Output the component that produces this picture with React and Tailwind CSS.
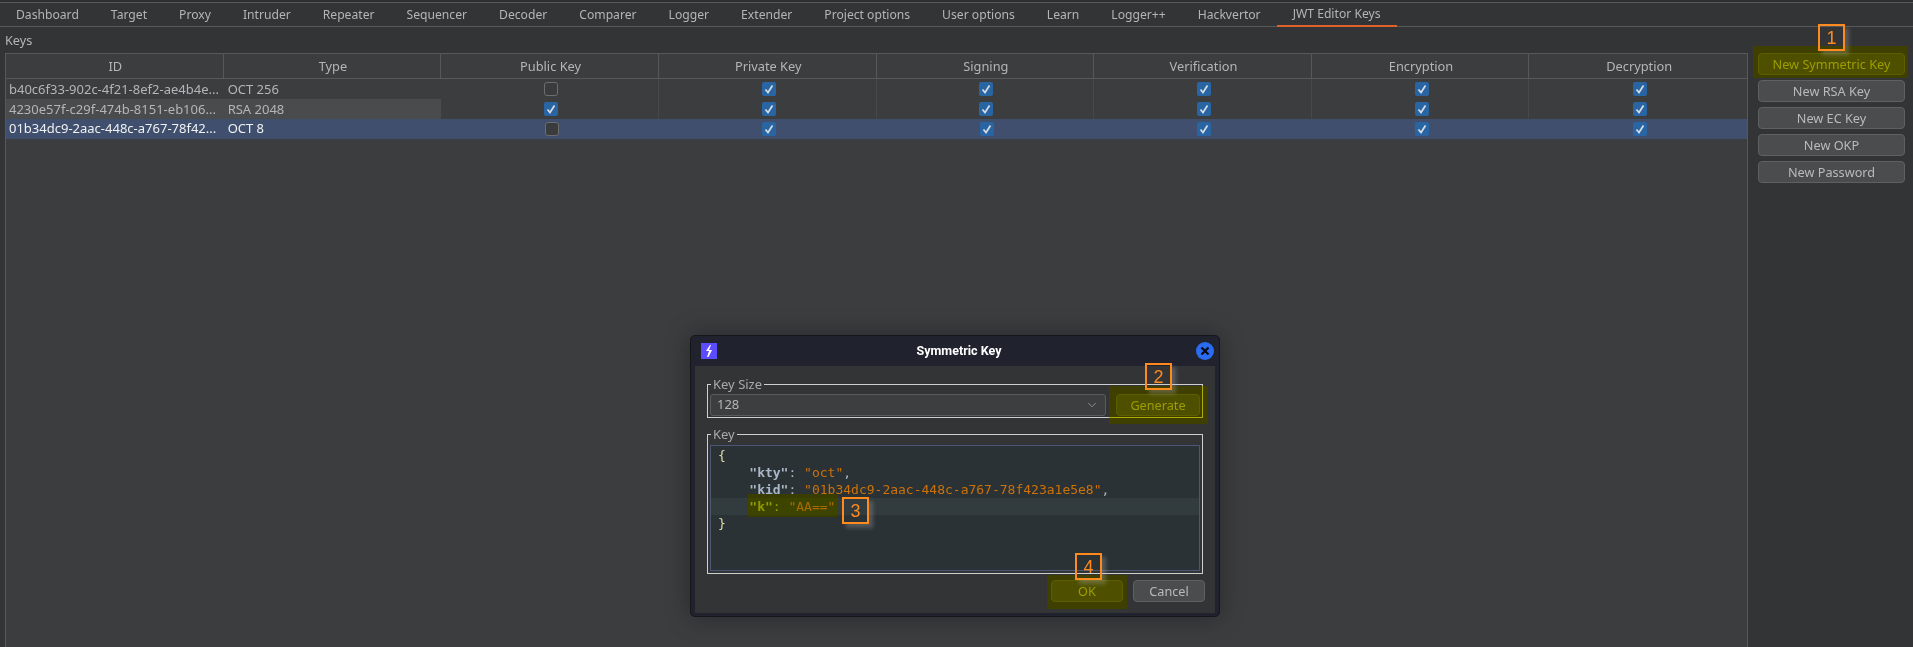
import React from 'react';
import { ChevronDown } from 'lucide-react';

const tabs = ['Dashboard', 'Target', 'Proxy', 'Intruder', 'Repeater', 'Sequencer', 'Decoder', 'Comparer', 'Logger', 'Extender', 'Project options', 'User options', 'Learn', 'Logger++', 'Hackvertor', 'JWT Editor Keys'];
const columns = ['ID', 'Type', 'Public Key', 'Private Key', 'Signing', 'Verification', 'Encryption', 'Decryption'];
const rows = [
  { id: 'b40c6f33-902c-4f21-8ef2-ae4b4e...', type: 'OCT 256', pub: false },
  { id: '4230e57f-c29f-474b-8151-eb106...', type: 'RSA 2048', pub: true, shaded: true },
  { id: '01b34dc9-2aac-448c-a767-78f42...', type: 'OCT 8', pub: false, selected: true },
];
const sideButtons = ['New RSA Key', 'New EC Key', 'New OKP', 'New Password'];

function Checkbox({ checked }) {
  if (!checked) {
    return <span className="block w-[14px] h-[14px] rounded-[3px] border border-[#6c6d6f] bg-[#3a3b3d]"></span>;
  }
  return (
    <span className="flex items-center justify-center w-[14px] h-[14px] rounded-[2px] bg-[#2a65a3]">
      <svg width="10" height="10" viewBox="0 0 10 10" fill="none">
        <path d="M1.5 5.5 L4 8.5 L8.5 1.5" stroke="#d5dde5" strokeWidth="1.7" />
      </svg>
    </span>
  );
}

function Button({ children, className = '' }) {
  return (
    <button className={`h-[22px] rounded-[4px] border border-[#5e6062] bg-[#4a4c4e] text-[#b9babb] text-[12.7px] leading-none ${className}`}>
      {children}
    </button>
  );
}

// orange step number laid over the shot
function Badge({ n, className }) {
  return (
    <div className={`absolute w-[27px] h-[27px] flex items-center justify-center border-2 border-[#ff8a1e] text-[#ff8a1e] text-[18px] leading-none font-['Liberation_Sans',sans-serif] shadow-[4px_4px_4px_rgba(190,190,190,0.28)] ${className}`}>
      {n}
    </div>
  );
}

// yellow marker: strip the blue, then dim towards olive
function Highlight({ className }) {
  return (
    <>
      <div className={`absolute bg-[#ffff00] mix-blend-multiply ${className}`}></div>
      <div className={`absolute bg-[#5a5a00]/30 ${className}`}></div>
    </>
  );
}

function Table() {
  return (
    <div className="flex-1 flex flex-col w-[1743px] border border-[#57585a] border-b-0 bg-[#3c3d3f]">
      <div className="grid grid-cols-8 h-[25px] border-b border-[#57585a]">
        {columns.map((c, i) => (
          <div key={c} className={`flex items-center justify-center pl-[2px] pt-[1px] text-[12.8px] text-[#b4b5b6] ${i < 7 ? 'border-r border-[#57585a]' : ''}`}>{c}</div>
        ))}
      </div>
      {rows.map((r) => (
        <div key={r.id} className={`grid grid-cols-8 h-[20px] ${r.selected ? 'bg-[#3f4f6d] text-[#f0f1f2]' : 'text-[#b4b5b6]'}`}>
          <div className={`flex items-center pl-[3px] whitespace-nowrap overflow-hidden ${r.selected ? '' : 'pt-[1px]'} ${r.shaded ? 'bg-[#4a4b4d]' : ''}`}>{r.id}</div>
          <div className={`flex items-center pl-[4px] ${r.selected ? '' : 'pt-[1px]'} ${r.shaded ? 'bg-[#4a4b4d]' : ''}`}>{r.type}</div>
          <div className={`flex items-center justify-center pl-[3px] ${r.selected ? '' : 'border-r border-[#47484a]'}`}><Checkbox checked={r.pub} /></div>
          {[0, 1, 2, 3, 4].map((i) => (
            <div key={i} className={`flex items-center justify-center pl-[3px] ${r.selected || i === 4 ? '' : 'border-r border-[#47484a]'}`}><Checkbox checked /></div>
          ))}
        </div>
      ))}
    </div>
  );
}

function Dialog() {
  return (
    <div className="absolute left-[690px] top-[335px] w-[530px] h-[282px] flex flex-col rounded-[5px] bg-[#20232e] border border-[#14161c] shadow-[0_0_24px_rgba(0,0,0,0.35)]">
      <div className="relative flex items-center justify-center h-[30px] shrink-0 pl-[8px]">
        <svg className="absolute left-[10px] top-[7px]" width="16" height="16" viewBox="0 0 16 16">
          <rect width="16" height="16" fill="#5b4cff" />
          <path d="M9 2 L5 8 H8 L6 14 L7.5 14 L11 7 H8 L10 2 Z" fill="#ffffff" />
        </svg>
        <span className="text-white font-bold text-[12.5px] font-['Roboto',sans-serif]">Symmetric Key</span>
        <span className="absolute right-[5px] top-[6px] flex items-center justify-center w-[18px] h-[18px] rounded-full bg-[#2a6cf0]">
          <svg width="10" height="10" viewBox="0 0 10 10" fill="none">
            <path d="M1.5 1.5 L8.5 8.5 M8.5 1.5 L1.5 8.5" stroke="#06080f" strokeWidth="2.2" />
          </svg>
        </span>
      </div>
      <div className="flex-1 mx-[4px] mb-[3px] bg-[#333436] pl-[12px] pr-[10px] pt-[9px] flex flex-col">
        <fieldset className="mr-[2px] border border-[#cfcfcf] px-[2px] pb-[1px]">
          <legend className="ml-[1px] px-[2px] h-[18px] leading-[18px] text-[#a9aaab]">Key Size</legend>
          <div className="flex gap-[10px] pt-[1px]">
            <div className="flex-1 h-[22px] flex items-center justify-between pl-[6px] pr-[6px] rounded-[3px] border border-[#5a5b5d] bg-[#3d3e40] text-[#b4b5b6]">
              <span>128</span>
              <ChevronDown size={14} strokeWidth={1.5} className="text-[#9a9b9c]" />
            </div>
            <Button className="w-[84px]">Generate</Button>
          </div>
        </fieldset>
        <fieldset className="mr-[2px] mt-[7px] border border-[#cfcfcf] px-[2px] pb-[2px]">
          <legend className="ml-[1px] px-[2px] h-[18px] leading-[18px] text-[#a9aaab]">Key</legend>
          <div className="mt-[2px] h-[126px] border border-[#4d5674] bg-[#2b3235] pl-[7px] pt-[1px] relative font-['DejaVu_Sans_Mono',monospace] text-[13px] leading-[17px] text-[#a9b7c6] whitespace-pre">
            <div className="absolute left-0 right-0 top-[52px] h-[17px] bg-[#323b3e]"></div>
            <div className="relative">
              <div className="text-[#e2dcaa]">{'{'}</div>
              <div>    <b>"kty"</b>: <span className="text-[#cc7209]">"oct"</span>,</div>
              <div>    <b>"kid"</b>: <span className="text-[#cc7209]">"01b34dc9-2aac-448c-a767-78f423a1e5e8"</span>,</div>
              <div>    <b>"k"</b>: <span className="text-[#cc7209]">"AA=="</span></div>
              <div className="text-[#e2dcaa]">{'}'}</div>
            </div>
          </div>
        </fieldset>
        <div className="flex justify-end gap-[10px] mt-[6px]">
          <Button className="w-[72px] border-[#5a90c0]">OK</Button>
          <Button className="w-[72px]">Cancel</Button>
        </div>
      </div>
    </div>
  );
}

export default function App() {
  return (
    <div className="relative h-screen overflow-hidden flex flex-col bg-[#333436] text-[13px] font-['Noto_Sans',sans-serif]">
      <div className="h-[3px] shrink-0 bg-[#2d2e30] border-b border-[#58595b]"></div>
      <nav className="flex h-[24px] shrink-0 border-b border-[#57585a]">
        {tabs.map((t) => (
          <div key={t} className={`flex items-center px-4 h-[24px] whitespace-nowrap text-[12.15px] text-[#b4b5b6] ${t === 'JWT Editor Keys' ? 'border-b-2 border-[#e0622a]' : ''}`}>{t}</div>
        ))}
      </nav>
      <div className="flex-1 flex min-h-0">
        <div className="flex flex-col pl-[5px]">
          <div className="h-[26px] pt-[1px] flex items-center text-[12.7px] text-[#b4b5b6]">Keys</div>
          <Table />
        </div>
        <div className="flex flex-col gap-[5px] w-[165px] pl-[10px] pr-[8px] pt-[26px]">
          <Button className="w-[147px]">New Symmetric Key</Button>
          {sideButtons.map((b) => (
            <Button key={b} className="w-[147px]">{b}</Button>
          ))}
        </div>
      </div>

      <Dialog />

      <Highlight className="left-[1753px] top-[46px] w-[155px] h-[32px]" />
      <Highlight className="left-[1109px] top-[386px] w-[99px] h-[38px]" />
      <Highlight className="left-[748px] top-[494px] w-[90px] h-[23px]" />
      <Highlight className="left-[1047px] top-[575px] w-[80px] h-[34px]" />

      <Badge n="1" className="left-[1818px] top-[24px]" />
      <Badge n="2" className="left-[1145px] top-[363px]" />
      <Badge n="3" className="left-[842px] top-[497px]" />
      <Badge n="4" className="left-[1075px] top-[553px]" />
    </div>
  );
}
